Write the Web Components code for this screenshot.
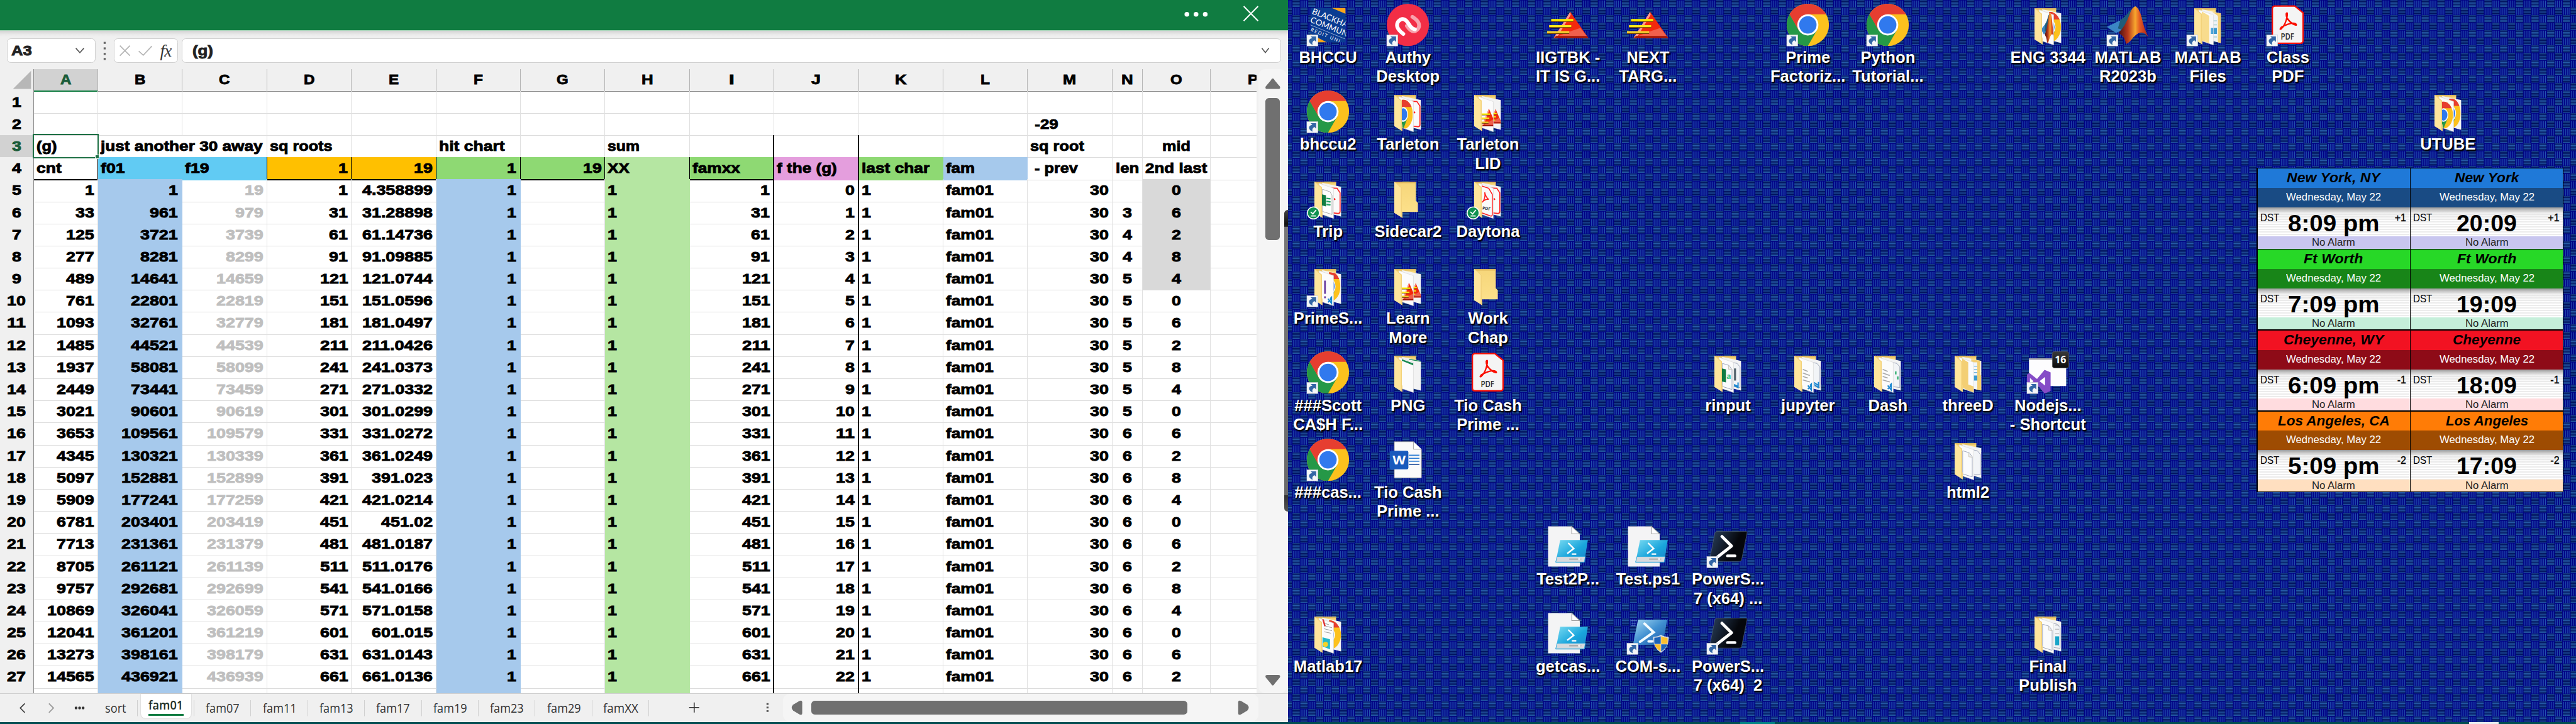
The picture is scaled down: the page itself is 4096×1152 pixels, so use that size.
<!DOCTYPE html>
<html lang="en">
<head>
<meta charset="utf-8">
<title>Desktop</title>
<style>
html,body{margin:0;padding:0;overflow:hidden;background:#000080}
body{font-family:"Liberation Sans",Arial,sans-serif}
desk-screen{zoom:.8}
</style>
</head>
<body>
<desk-screen></desk-screen>
<script>
const make=(host,html)=>{const r=host.attachShadow({mode:'open'});r.innerHTML=html;return r;};

/* Advance widths (em) of the heavy sans face used by the workbook. */
const HEAVY={' ':.333,'.':.333,'-':.333,'(':.389,')':.389,f:.389,i:.333,j:.333,l:.333,m:1,r:.444,s:.611,t:.444,v:.611,w:.944,y:.611,z:.556,
A:.778,B:.778,C:.778,D:.778,E:.722,F:.667,G:.833,H:.833,I:.389,J:.667,K:.833,L:.667,M:.944,N:.833,O:.833,P:.722,X:.778};
const heavyWidth=(s,size)=>[...s].reduce((a,c)=>a+(HEAVY[c]??.667),0)*size;

/* One line of text set to an exact width. */
class FitText extends HTMLElement{
  connectedCallback(){
    if(this.shadowRoot)return;
    const heavy=this.hasAttribute('heavy');
    const w=this.getAttribute('w')||heavyWidth(this.textContent,+this.getAttribute('heavy')||28);
    const r=make(this,`<style>:host{display:inline-block;flex:none;white-space:pre;width:${w}px;text-align:left}
    span{display:inline-block;transform-origin:0 50%;${heavy?'font-weight:700;-webkit-text-stroke:1.1px currentColor;':''}}</style><span><slot></slot></span>`);
    const s=r.querySelector('span');
    const k=this.getBoundingClientRect().width/s.getBoundingClientRect().width;
    if(isFinite(k)&&k>0)s.style.transform=`scaleX(${k.toFixed(4)})`;
  }
}
customElements.define('fit-text',FitText);

class TitleBar extends HTMLElement{
  connectedCallback(){make(this,`<style>:host{display:flex;justify-content:flex-end;align-items:flex-start;height:60px;background:#107c41;border-bottom:2px solid #a9d6ba;padding-right:57px;box-sizing:content-box}
  svg{display:block}</style>
  <svg width="150" height="60" viewBox="2353 0 150 60"><g fill="#fff"><circle cx="2359.5" cy="28.5" r="4.7"/><circle cx="2377.7" cy="28.5" r="4.7"/><circle cx="2396" cy="28.5" r="4.7"/></g><path d="M2472.500 12.500L2501 41.500M2501 12.500L2472.500 41.500" stroke="#fff" stroke-width="2.600"/></svg>`);}
}
customElements.define('title-bar',TitleBar);

class FormulaBar extends HTMLElement{
  connectedCallback(){make(this,`<style>:host{display:flex;height:76px;box-sizing:border-box;padding:15px 14px 12px;background:linear-gradient(#d3d3d3,#e9e9e9 7px,#f0f0f0 12px);font-size:27px}
  .b{background:#fff;border:1px solid #cfcfcf;border-radius:8px;box-sizing:border-box;height:49px;display:flex;align-items:center}
  .n{width:176px;padding:0 20px 0 7px;justify-content:space-between;color:#222}
  .d{width:36px;display:flex;align-items:center;justify-content:center}
  .f{width:128px;padding:0 8px 0 9px;gap:14px}
  .t{flex:1;margin-left:7px;padding:0 20px 0 20px;justify-content:space-between;color:#222}
  i{font:italic 34px "Liberation Serif",serif;color:#333;line-height:40px;letter-spacing:-1px}</style>
  <div class="b n"><fit-text heavy="27" w="41">A3</fit-text><svg width="20" height="14" viewBox="0 0 20 14"><path d="M2 2L10 11L18 2" fill="none" stroke="#555" stroke-width="2"/></svg></div>
  <div class="d"><svg width="6" height="40"><g fill="#666"><rect x="1" y="2" width="4" height="4"/><rect x="1" y="13" width="4" height="4"/><rect x="1" y="24" width="4" height="4"/><rect x="1" y="34" width="4" height="4"/></g></svg></div>
  <div class="b f"><svg width="24" height="24"><path d="M2 2L22 22M22 2L2 22" stroke="#b4b4b4" stroke-width="2"/></svg><svg width="30" height="24"><path d="M2 13L11 21L28 3" fill="none" stroke="#b4b4b4" stroke-width="2"/></svg><i>fx</i></div>
  <div class="b t"><fit-text heavy="28" w="41">(g)</fit-text><svg width="20" height="14" viewBox="0 0 20 14"><path d="M3 2L10 11L17 2" fill="none" stroke="#555" stroke-width="2"/></svg></div>`);}
}
customElements.define('formula-bar',FormulaBar);

const COLS='ABCDEFGHIJKLMNOP'.split('');
const CNT=[1,33,125,277,489,761,1093,1485,1937,2449,3021,3653,4345,5097,5909,6781,7713,8705,9757,10869,12041,13273,14565];
class SheetGrid extends HTMLElement{
  connectedCallback(){
    const rows=[{}, {M:' -29'}, {A:'(g)',B:'just another 30 away',D:'sq roots',F:'hit chart',H:'sum',M:'sq root',O:'mid'},
      {A:'cnt',B:'f01',C:'f19',D:'1',E:'19',F:'1',G:'19',H:'XX',I:'famxx',J:'f the (g)',K:'last char',L:'fam',M:' - prev',N:'len',O:'2nd last'}];
    CNT.forEach((c,k)=>{const n=30*k+1,q=n*n,s=String(q);rows.push({A:c,B:q,C:q+18,D:n,E:Number(Math.sqrt(q+18).toPrecision(7)),F:1,H:'1',I:n,J:k,K:'1',L:'fam01',M:30,N:k?String(s.length):'',O:k?s[s.length-2]:'0'});});
    rows.push({});
    let h='<div class="row head"><div class="rh corner"><svg width="40" height="38" viewBox="0 0 40 38"><path d="M38 1V37H2Z" fill="#b7b7b7"/></svg></div>';
    for(const c of COLS)h+=`<div class="ch ${c==='A'?'sel':''}"><fit-text heavy>${c}</fit-text></div>`;
    h+='</div>';
    rows.forEach((r,i)=>{
      const n=i+1;
      h+=`<div class="row r${n} ${n>4?'data':''} ${n===28?'last':''}"><div class="rh ${n===3?'sel':''}">${n<28?`<fit-text heavy>${n}</fit-text>`:''}</div>`;
      for(const c of COLS){
        const v=r[c];
        const num=typeof v==='number'||(n===4&&'DEFG'.includes(c));
        h+=`<div class="c ${c}${num?' num':''}${n>4&&n<10?' top5':''}">${v===undefined||v===''?'':`<fit-text heavy>${v}</fit-text>`}</div>`;
      }
      h+='</div>';
    });
    make(this,`<style>:host{display:block;width:2497px;height:1242px;overflow:hidden;background:#fff;font-size:28px;color:#000}
    .row{display:grid;grid-template-columns:67px 128px repeat(12,168px) 60px 136px 168px;height:44px;line-height:44px}
    .row>div{box-sizing:border-box;white-space:pre}
    .head{height:43.500px;background:#f0f0f0;line-height:43px}
    .ch{border-right:1px solid #b5b5b5;border-bottom:2px solid #8f8f8f;display:flex;justify-content:center}
    .ch.sel{background:#d2d2d2;color:#1a5c38;border-bottom:3px solid #107c41}
    .rh{background:#f0f0f0;border-right:1px solid #8f8f8f;border-bottom:1px solid #b0b0b0;display:flex;justify-content:center}
    .corner{justify-content:flex-end;align-items:center;padding-right:2px;border-bottom-color:#999}
    .rh.sel{background:#d2d2d2;color:#1a5c38}
    .c{border-right:1px solid #e0e0e0;border-bottom:1px solid #dcdcdc;display:flex;padding:0 6px 0 5px;position:relative;min-width:0}
    .c.num{justify-content:flex-end}
    .N,.O{justify-content:center}
    .N,.O,.c.N,.c.O{padding:0}
    .B.num,.F.num{padding-right:8px}
    .r3 .B{border-right-color:transparent}
    .data .B,.data .F{background:#a6c9ec;border-color:#a6c9ec}
    .data .H{background:#b5e6a2;border-color:#b5e6a2}
    .data .C{color:#bfbfbf}
    .c.O.top5{background:#d9d9d9;border-color:#d9d9d9}
    .row.r3>.I,.row.r4>.I,.row.data>.I,.row.r3>.J,.row.r4>.J,.row.data>.J{border-right:3px solid #000}
    .r3 .D,.r3 .E,.r3 .F,.r3 .G,.r3 .H,.r3 .I{border-bottom:1.500px solid #000}
    .r4 .A{border-right-color:#000;border-bottom:3px solid #000}
    .r4 .B,.r4 .C{background:#61cbf3;border-color:#61cbf3}
    .r4 .C{border-right-color:#000}
    .r4 .D,.r4 .E,.r4 .F,.r4 .G,.r4 .H,.r4 .I{border-right:1px solid #000;border-bottom:3px solid #000}
    .r4 .D,.r4 .E{background:#ffc000}.r4 .F,.r4 .G,.r4 .I{background:#8ed973}.r4 .H{background:#b5e6a2}
    .r4 .J{background:#e49edd;border-bottom-color:#e49edd}.r4 .K{background:#8ed973;border-color:#8ed973}.r4 .L{background:#a6c9ec;border-color:#a6c9ec}
    .r3 .A::before{content:"";position:absolute;left:-2px;top:-2px;right:-2px;bottom:-2px;border:3px solid #1e7145;z-index:1}
    .r3 .A::after{content:"";position:absolute;right:-4px;bottom:-4px;width:7px;height:7px;background:#1e7145;border:1px solid #fff;z-index:2}
    .c fit-text{position:relative;z-index:1}
    .last{height:14px}</style>${h}`);
  }
}
customElements.define('sheet-grid',SheetGrid);

class ScrollV extends HTMLElement{
  connectedCallback(){make(this,`<style>:host{display:flex;width:63px;height:1242px;background:#f0f0f0;padding-left:4px;box-sizing:border-box}
  .t{width:57px;height:100%;background:#f5f5f5;border-radius:14px;display:flex;flex-direction:column;align-items:center;box-sizing:border-box;padding:18px 0 15px}
  .h{width:28px;height:282px;border-radius:7px;background:#707070;margin-top:18px;margin-bottom:auto}
  svg{display:block}</style><div class="t"><svg width="32" height="22"><path d="M16 1Q18 1 20 5L30 17Q32 22 27 22H5Q0 22 2 17L12 5Q14 1 16 1Z" fill="#707070"/></svg><div class="h"></div><svg width="32" height="22"><path d="M16 21Q18 21 20 17L30 5Q32 0 27 0H5Q0 0 2 5L12 17Q14 21 16 21Z" fill="#707070"/></svg></div>`);}
}
customElements.define('scroll-v',ScrollV);

class TabBar extends HTMLElement{
  connectedCallback(){
    const tabs=['fam07','fam11','fam13','fam17','fam19','fam23','fam29','famXX'];
    make(this,`<style>:host{display:flex;height:56px;background:#f0f0f0;border-top:1px solid #cfcfcf;box-sizing:border-box;font:25px "Open Sans","Noto Sans",sans-serif;color:#333}
    .nav{width:209px;display:flex;align-items:center;padding-left:36px;box-sizing:border-box}
    .tab{width:113px;display:flex;justify-content:center;align-items:center;line-height:54px}
    .tab{background:linear-gradient(#c8c8c8,#c8c8c8) right 12px/1px 32px no-repeat;padding-top:2px;box-sizing:border-box}
    .sort{width:65px;justify-content:flex-start}
    .on{width:112px;padding:0 6px;display:flex;box-sizing:border-box;background:linear-gradient(#c8c8c8,#c8c8c8) right 12px/1px 32px no-repeat}
    .on>div{flex:1;height:49px;background:#fff;border-radius:0 0 9px 9px;margin-top:-1px;box-shadow:0 0 2px #aaa;display:flex;flex-direction:column;align-items:center;color:#1f2f27}
    .on fit-text{line-height:46px;height:41px;font-weight:600}
    .on u{display:block;width:70px;height:3px;background:#107c41}
    .plus{width:238px;display:flex;align-items:center;justify-content:space-between;padding-left:79px;box-sizing:border-box}
    .hs{margin-left:28px;width:945px;background:#f5f5f5;border-radius:14px;margin-top:-1px;display:flex;align-items:center;padding-left:17px;box-sizing:border-box}
    .th{width:747px;height:28px;border-radius:7px;background:#707070;margin:0 100px 0 17px}
    svg{display:block;flex:none}</style>
    <div class="nav"><svg width="140" height="24" viewBox="36 0 140 24"><path d="M49 3L40 12L49 21" fill="none" stroke="#444" stroke-width="2.200"/><path d="M97 3L106 12L97 21" fill="none" stroke="#999" stroke-width="2.200"/><g fill="#333"><circle cx="151" cy="12" r="2.800"/><circle cx="158" cy="12" r="2.800"/><circle cx="165" cy="12" r="2.800"/></g></svg></div>
    <div class="tab sort"><fit-text w="42">sort</fit-text></div>
    <div class="on"><div><fit-text w="69">fam01</fit-text><u></u></div></div>
    ${tabs.map(t=>`<div class="tab"><fit-text w="${t==='famXX'?70:67}">${t}</fit-text></div>`).join('')}
    <div class="plus"><svg width="22" height="22"><path d="M11 1V21M1 11H21" stroke="#333" stroke-width="2"/></svg><svg width="6" height="20"><g fill="#555"><rect x="1" y="1" width="4" height="3.500"/><rect x="1" y="8" width="4" height="3.500"/><rect x="1" y="15" width="4" height="3.500"/></g></svg></div>
    <div class="hs"><svg width="23" height="30"><path d="M1 15Q1 12 4 9L16 2Q22 -1 22 4V26Q22 31 16 28L4 21Q1 18 1 15Z" fill="#707070"/></svg><div class="th"></div><svg width="23" height="30"><path d="M22 15Q22 12 19 9L7 2Q1 -1 1 4V26Q1 31 7 28L19 21Q22 18 22 15Z" fill="#707070"/></svg></div>`);
  }
}
customElements.define('tab-bar',TabBar);

class WorkbookWindow extends HTMLElement{
  connectedCallback(){make(this,`<style>:host{display:flex;flex-direction:column;width:2560px;height:1436px;background:#f0f0f0;position:relative}
  .m{display:flex;height:1242px}
  .edge{position:absolute;left:2553px;top:418px;width:7px;height:600px;border-radius:7px 0 0 7px;background:linear-gradient(#444 0,#111 28px,#222 33px,#777 34px,#6a6a6a 567px,#333 568px,#555 600px)}</style>
  <title-bar></title-bar><formula-bar></formula-bar><div class="m"><sheet-grid></sheet-grid><scroll-v></scroll-v></div><tab-bar></tab-bar><div class="edge"></div>`);}
}
customElements.define('workbook-window',WorkbookWindow);

/* ---------- icon artwork, all on an 84 x 84 canvas ---------- */
let uid=0;
const chrome=()=>{const i='k'+(++uid);return `<clipPath id="${i}"><circle cx="42" cy="42" r="42"/></clipPath><g clip-path="url(#${i})"><rect width="84" height="84" fill="#fcc11d"/><path d="M0 10L23.800 52.500L42 60L60.200 52.500L42 84H0Z" fill="#259847"/><path d="M0 0H84V21H42V42L23.800 52.500L5.600 21L0 12Z" fill="#e63e30"/></g><circle cx="42" cy="42" r="21" fill="#fff"/><circle cx="42" cy="42" r="17.300" fill="#3079ee"/>`;};
const shortcut='<rect x="0" y="62" width="22" height="22" fill="#f4f6f8" stroke="#c9ced6" stroke-width=".8"/><path d="M7.500 65H18.500V76L15 72.500Q9 76 11.500 82Q3 78 4.500 72.500Q6 69 11 68.500Z" fill="#3366a5"/>';
const air=()=>`<path d="M46 16L82 68H13Z" fill="#f2290d"/><path d="M46 16L13 68H19L47 22Z" fill="#ff9c8c"/><path d="M66 48L82 68H13L40 57Z" fill="#f0604c"/><path d="M18 64H79L82 68H13Z" fill="#a31506"/><path d="M8 34.500H52M4 46.500H48M0 58.500H44" stroke="#6c3a00" stroke-width="3"/><path d="M8 32.500H52" stroke="#fff200" stroke-width="4.200"/><path d="M4 44.500H48" stroke="#ffe81a" stroke-width="4.200"/><path d="M0 56.500H44" stroke="#f4d12f" stroke-width="4.200"/>`;
const pdf=()=>`<path d="M15 4.500H56L72.500 18V73Q72.500 78.500 67 78.500H17Q11.500 78.500 11.500 73V10Q11.500 4.500 17 4.500Z" fill="#f4f4f4" stroke="#fa0f00" stroke-width="2.800"/><path d="M29 47Q25 52 29 50Q38 42 41 24Q42 15 39 20Q38 30 52 40Q62 45 58 40Q50 35 29 47Z" fill="none" stroke="#fa0f00" stroke-width="2.800"/><text x="28" y="71" font-family="Open Sans,sans-serif" font-weight="600" font-size="17" textLength="27" lengthAdjust="spacingAndGlyphs" fill="#2c2c2c">PDF</text>`;
const matlab=()=>{const i='m'+(++uid);return `<linearGradient id="${i}" x1="0" x2="1"><stop offset="0" stop-color="#4b1012"/><stop offset=".3" stop-color="#b5371b"/><stop offset=".55" stop-color="#f7a62e"/><stop offset=".7" stop-color="#e35a22"/><stop offset="1" stop-color="#a81d1a"/></linearGradient><path d="M0 46L24 34Q30 34 36 27L56 5Q48 34 34 50Q24 56 18 58Z" fill="#3b86c4"/><path d="M27 32Q36 28 44 15L57 5Q46 40 32 52L22 49Z" fill="#1f5c79"/><path d="M57 5Q66 10 71 35Q76 54 83 67Q74 54 64 58Q56 62 50 70Q44 78 38 80Q36 66 26 60L24 57Q36 46 45 22Q50 6 57 5Z" fill="url(#${i})"/>`;};

/* Open folder: front and back sheets carry small previews. */
const folder=(front,back)=>{const i='f'+(++uid);
  const papers=front===null?'':`<clipPath id="${i}a"><path d="M44 15L68 19V78L44 72Z"/></clipPath><clipPath id="${i}b"><path d="M30 13L53 22V82L30 73Z"/></clipPath>
  <path d="M30 11L68 19V78L52 74Z" fill="#f3f3f3"/><g clip-path="url(#${i}a)">${back||''}</g>
  <path d="M24 12L53 22V82L30 74Z" fill="#fbfbfb" stroke="#d5d5d5" stroke-width=".8"/><g clip-path="url(#${i}b)">${front||''}</g>`;
  return `<linearGradient id="${i}" x1="0" x2="0" y1="0" y2="1"><stop offset="0" stop-color="#f6d67a"/><stop offset="1" stop-color="#fce08a"/></linearGradient>
  <path d="M15 9H58V47L62 51V69H15Z" fill="url(#${i})"/><path d="M15 9H58V12H15Z" fill="#dfb85c"/>${papers}
  <path d="M15 9L30 20V66L31 70V81L15 71Z" fill="#ffe69c"/><path d="M15 9L30 20V66L31 70V81L28 79V21Z" fill="#f3d27a"/>`;};
const sc=(s,x,y,k,ky)=>`<g transform="translate(${x} ${y}) scale(${k} ${ky||k})">${s}</g>`;
const vs='<path d="M49 68L42 75M42 68L49 77V65L46 68" fill="none" stroke="#1a86d0" stroke-width="2.500"/>';
const lines='<path d="M32 36L42 40M32 43L46 48M32 50L42 53M32 57L46 61" stroke="#a8a8a8" stroke-width="2"/>';
const outline='<path d="M31 24L44 28L50 36V76L31 70Z" fill="#fafbfd" stroke="#8a93ab" stroke-width="1"/><path d="M43 28V36L50 37" fill="#e9e9e9" stroke="#b9b09a" stroke-width=".8"/>';
const outB='<path d="M50 22L60 24L66 31V72L50 70" fill="#f2f4f7" stroke="#8a93ab" stroke-width="1"/>';
const pdfB='<path d="M40 21L60 22L66 31V68Q66 72 62 72L44 70" fill="#fafafa" stroke="#f22" stroke-width="2"/><path d="M54 42L56 45" stroke="#f22" stroke-width="3"/>';
const tick='<circle cx="13" cy="71" r="12" fill="#0f9150" stroke="#fff" stroke-width="2"/><path d="M7.500 69L12 73L18.500 65M8 77H18" fill="none" stroke="#fff" stroke-width="2.200"/>';
const ART={
  bhccu:()=>`<clipPath id="bh"><rect x="7" y="8" width="70" height="69" rx="2"/></clipPath><g clip-path="url(#bh)"><rect x="7" y="8" width="70" height="69" fill="#0a3c92"/><path d="M49 8H77V20Z M7 60L40 77H7Z" fill="#f9a51b"/><g transform="rotate(22 11 20)" font-family="Lato,sans-serif" fill="#fff"><text x="9" y="20" font-size="16.500">BLACKHAW</text><text x="12" y="37" font-size="16.500">COMMUNI</text><path d="M14 42H90" stroke="#9db6dd" stroke-width="1"/><text x="20" y="53" font-size="9.500" letter-spacing="2">REDIT UNI</text></g></g>${shortcut}`,
  authy:()=>`<circle cx="42" cy="42" r="42" fill="#f22e46"/><g fill="none" stroke-linecap="round" stroke-width="7.500"><path d="M51 26Q70 38 62 50Q54 60 44 49L40 44" stroke="#f8a3ad"/><path d="M33 60Q15 47 23 35Q32 25 41 36L47 45Q51 50 56 51" stroke="#fff"/></g>${shortcut}`,
  air, chrome:()=>chrome()+shortcut, pdf, pdfs:()=>pdf()+shortcut, matlab:()=>matlab()+shortcut,
  tarleton:()=>folder(sc(chrome(),14,18,.45,.7),pdfB),
  airf:()=>folder(sc(air(),25,25,.42,.68),sc(air(),42,28,.34,.55)),
  trip:()=>folder('<path d="M31 24L46 29L50 36V74L31 68Z" fill="#fff" stroke="#999"/><path d="M30 34L38 36V58L30 56Z" fill="#107c41"/><path d="M39 42L47 43M39 48L47 49M39 54L47 55" stroke="#21a366" stroke-width="3"/>',pdfB)+tick,
  daytona:()=>folder('<path d="M26 16L44 22L51 34V74Q51 78 47 77L28 70" fill="#fafafa" stroke="#f22" stroke-width="2"/><path d="M31 50Q38 42 36 30Q38 40 44 44Q36 43 31 50Z" fill="none" stroke="#f22" stroke-width="2"/><text x="31" y="64" transform="rotate(8 31 64)" font-family="Open Sans,sans-serif" font-weight="700" font-size="8.500" fill="#333">PDF</text>',pdfB)+tick,
  empty:()=>folder(null),
  primes:()=>folder('<path d="M36 32V58M36 63V67" stroke="#6b3fa0" stroke-width="3.500"/>'+vs,sc(chrome(),28,14,.46,.7))+shortcut,
  png:()=>folder('<path d="M26 14L53 24V28L26 17Z" fill="#1b8a53"/>','<path d="M26 12L68 18V21L36 15Z" fill="#1b8a53"/>'),
  matlab17:()=>folder('<path d="M34 22L44 25M34 27L50 31M34 33L50 37M34 39L48 42" stroke="#9a9a9a" stroke-width="1.200"/><path d="M32 14L36 28" stroke="#d33" stroke-width="3"/><path d="M31 50L46 54V74L31 68Z" fill="#22b8c8"/><circle cx="37" cy="64" r="5" fill="#f5d327"/>',sc(chrome(),20,16,.57,.7)),
  word:()=>`<path d="M15 6H53L69 21V78H15Z" fill="#fafafa" stroke="#8c8c8c"/><path d="M53 6V21H69" fill="#fff" stroke="#8c8c8c"/><path d="M44 33H65M44 39H65M44 45H65" stroke="#2b7cd3" stroke-width="2"/><path d="M44 51H65" stroke="#103f91" stroke-width="2"/><rect x="6" y="24" width="37" height="37" rx="3" fill="#185abd"/><text x="11.500" y="51" font-family="Open Sans,sans-serif" font-weight="700" font-size="25" textLength="26" lengthAdjust="spacingAndGlyphs" fill="#fff">W</text>`,
  engf:()=>folder(sc(matlab(),28,12,.32,.85),sc(chrome(),24,16,.52,.72)),
  matf:()=>folder('<path d="M28 14L45 24V80L28 72Z" fill="#f8dc8d"/><path d="M46 22V80H53V22Z" fill="#f7f7f7"/><path d="M48 48H53V60H48Z" fill="#4aa3d8"/>','<path d="M48 14H68V84H60L62 24Z" fill="#f4cf72"/><path d="M48 26H62V78H48Z" fill="#eef3f7"/><path d="M52 34H60M52 42H60M52 66H60" stroke="#9cc" stroke-width="1.500"/><path d="M52 48H60V60H52Z" fill="#3c99cf"/>')+shortcut,
  utube:()=>folder(sc(chrome(),14,22,.45,.64),sc(chrome(),30,16,.44,.7)),
  rinput:()=>folder(outline+'<path d="M30 34L38 36V62L30 60Z" fill="#107c41"/><text x="39" y="55" font-family="Open Sans,sans-serif" font-weight="700" font-size="15" fill="#34c481">a</text>',outB+'<path d="M56 34V58" stroke="#51606b" stroke-width="4"/><path d="M54 66L62 70M62 62V72L54 68" stroke="#1a86d0" stroke-width="2.500" fill="none"/>'),
  jupyter:()=>folder(lines+vs,outB+'<path d="M54 62L63 68M63 61V72L54 66" stroke="#1a86d0" stroke-width="2.500" fill="none"/>'),
  dash:()=>folder(lines+vs,outB+'<path d="M58 40V46M62 50V56" stroke="#34b071" stroke-width="3"/>'),
  threed:()=>folder('<path d="M26 12L42 22V66L53 70V82L42 78L26 70Z" fill="#f3cf74"/>','<path d="M48 12H58V17H66V46L69 51V80H48Z" fill="#f4cf72"/><path d="M48 22H60V77H48Z" fill="#f3f6f9"/><path d="M52 30H60M52 36H60M52 42H60" stroke="#6db1dd" stroke-width="1.500"/><path d="M52 48H60V58H52Z" fill="#3c99cf"/>'),
  html2:()=>folder(outline,outB),
  finalp:()=>folder(outline,outB+'<path d="M56 48H64V66H56Z" fill="#18a5c8"/><path d="M56 26H64M56 34H64M56 42H64" stroke="#999" stroke-width="1"/>'),
  node:()=>`<path d="M4 14H78V69H4Z" fill="#fdfdfe"/><path d="M4 14H78V16.500H4Z" fill="#8d8d92"/><path d="M0 46L5 43L20 55L35 37L47 42V79L35 84L20 66L6 77L0 74Z" fill="#854cc7"/><path d="M6 53V66L13 59.500ZM25 59.500L36 51V68Z" fill="#fff"/>${shortcut}<linearGradient id="nb" x1="0" x2="0" y1="0" y2="1"><stop offset="0" stop-color="#3a3a3a"/><stop offset="1" stop-color="#0a0a0a"/></linearGradient><rect x="50.500" y=".5" width="32.500" height="32.500" rx="4" fill="url(#nb)" stroke="#555"/><text x="66.700" y="24" text-anchor="middle" font-family="Open Sans,sans-serif" font-weight="700" font-size="20" fill="#fff">16</text>`,
  ps1:()=>{const i='p'+(++uid);return `<linearGradient id="${i}" x1="0" x2="1" y1="0" y2="1"><stop offset="0" stop-color="#7bdcf2"/><stop offset=".55" stop-color="#19a5dc"/><stop offset="1" stop-color="#1b7fc4"/></linearGradient><path d="M2 2H49L65 18V82H2Z" fill="#f4f4f5"/><path d="M49 2V17H65Z" fill="#fff" stroke="#9a9a9a" stroke-width="1.300"/><path d="M26 29H81L74 74H17Z" fill="url(#${i})"/><path d="M20 62H76L74 73H17Z" fill="#d7dadd" stroke="#2aa9dc" stroke-width="1.200"/><path d="M44 67H68" stroke="#999" stroke-width="2"/><circle cx="64" cy="67" r="2.500" fill="#eee"/><path d="M42 35L53 46L40 56M49 57H58" fill="none" stroke="#fff" stroke-width="3"/>`;},
  ps7:()=>{const i='p'+(++uid);return `<linearGradient id="${i}" x1="0" x2="1" y1="0" y2=".4"><stop offset="0" stop-color="#2b4260"/><stop offset=".75" stop-color="#05070c"/></linearGradient><path d="M20 12H78Q81 12 80 15L69 69Q68.500 71.500 65 71.500H8Q4.500 71.500 5.500 68L16 15Q17 12 20 12Z" fill="url(#${i})" stroke="#4b5a70" stroke-width="1"/><path d="M30 22L49 41L21 63" fill="none" stroke="#fff" stroke-width="6" stroke-linecap="round" stroke-linejoin="round"/><path d="M41 60.500H56" stroke="#fff" stroke-width="5.500" stroke-linecap="round"/>${shortcut}`;},
  com:()=>`<linearGradient id="cg" x1="0" x2="1" y1="0" y2="1"><stop offset="0" stop-color="#a9dcf5"/><stop offset=".5" stop-color="#3f8fd0"/><stop offset="1" stop-color="#1a55a8"/></linearGradient><path d="M22 15H80L71 65H12Z" fill="url(#cg)"/><path d="M7 17H20M9 22H18M8 27H17" stroke="#79a8dd" stroke-width="1.500" opacity=".6"/><path d="M35 23L53 40L26 59M43 58H50" fill="none" stroke="#f2fbff" stroke-width="5" stroke-linecap="round"/><path d="M67.500 45Q74 49 83 49Q84 70 67.500 81Q51 70 52 49Q61 49 67.500 45Z" fill="#d9dee4"/><path d="M67 48V63H54.500Q54 57 54.500 51Q61 51 67 48Z" fill="#1c62b8"/><path d="M68 48Q74 51 80.500 51Q81 57 80.500 63H68Z" fill="#fbc02d"/><path d="M67 64V78Q57 72 54.800 64Z" fill="#fbc02d"/><path d="M68 64V78Q78 72 80.200 64Z" fill="#1c62b8"/>${shortcut}`
};

class DesktopIcon extends HTMLElement{
  connectedCallback(){make(this,`<style>:host{display:flex;flex-direction:column;align-items:center;width:159px;height:173px}
  svg{display:block;flex:none;overflow:visible}
  .l{white-space:pre;text-align:center;font-weight:700;font-size:32px;line-height:38px;color:#fff;margin-top:4px;text-shadow:2px 2px 2px #000,1px 2px 3px #000}</style>
  <svg width="84" height="84" viewBox="0 0 84 84">${ART[this.getAttribute('art')]()}</svg><div class="l"><slot></slot></div>`);}
}
customElements.define('desktop-icon',DesktopIcon);

class ClockCell extends HTMLElement{
  connectedCallback(){
    const g=a=>this.getAttribute(a)||'';
    make(this,`<style>:host{display:grid;grid-template-rows:38.500px 38.500px 58px 24px;background:#fff;color:#000}
    div{display:flex;justify-content:center;position:relative}
    .c{background:${g('c1')};font:italic 700 27px/37px "Liberation Sans",sans-serif}
    .d{background:${g('c2')};color:#fff;font-size:21px;line-height:37px}
    .t{background:linear-gradient(#999,#bbb 4px,rgba(230,230,230,.6) 11px,rgba(255,255,255,0) 30px),repeating-linear-gradient(#fff 0 2.500px,#ececec 2.500px 5px);font-weight:700;font-size:47px;line-height:64px;justify-content:space-between}
    .t>*{flex:none}
    .s{width:51px;padding-left:5px;font-weight:400;font-size:21px;line-height:42px;box-sizing:border-box}
    .o{width:51px;padding-right:7px;font-weight:400;font-size:20px;line-height:42px;box-sizing:border-box;text-align:right;-webkit-text-stroke:.4px #000}
    .a{background:${g('c3')};font-size:20px;line-height:24px;color:#222}</style>
    <div class="c"><fit-text w="${g('w')}">${g('city')}</fit-text></div><div class="d"><fit-text w="189">Wednesday, May 22</fit-text></div>
    <div class="t"><span class="s"><fit-text w="38">DST</fit-text></span><fit-text w="${g('tw')}">${g('time')}</fit-text><span class="o">${g('off')}</span></div>
    <div class="a"><fit-text w="86">No Alarm</fit-text></div>`);
  }
}
customElements.define('clock-cell',ClockCell);

class ClockBoard extends HTMLElement{
  connectedCallback(){
    const d=[['New York, NY',186,'8:09 pm','+1','#1f79d8','#194b84','#c8c6ef'],['New York',128,'20:09','+1','#1f79d8','#194b84','#c8c6ef'],
    ['Ft Worth',118,'7:09 pm','','#27d827','#188518','#c5efda'],['Ft Worth',118,'19:09','','#27d827','#188518','#c5efda'],
    ['Cheyenne, WY',199,'6:09 pm','-1','#f21222','#8e0b17','#ffdcdf'],['Cheyenne',135,'18:09','-1','#f21222','#8e0b17','#ffdcdf'],
    ['Los Angeles, CA',222,'5:09 pm','-2','#ff7c06','#9e4c02','#ffdfc0'],['Los Angeles',164,'17:09','-2','#ff7c06','#9e4c02','#ffdfc0']];
    make(this,`<style>:host{display:grid;grid-template-columns:302.500px 302.500px;gap:2px;padding:1.500px;background:#000;width:609px;box-sizing:border-box;justify-content:space-between}</style>`+
    d.map(r=>`<clock-cell city="${r[0]}" w="${r[1]}" time="${r[2]}" tw="${r[2].length>5?182:120}" off="${r[3]}" c1="${r[4]}" c2="${r[5]}" c3="${r[6]}"></clock-cell>`).join(''));
  }
}
customElements.define('clock-board',ClockBoard);

class DesktopArea extends HTMLElement{
  connectedCallback(){
    const items=[[0,0,'bhccu','BHCCU'],[1,0,'authy','Authy\nDesktop'],[3,0,'air','IIGTBK -\nIT IS G...'],[4,0,'air','NEXT\nTARG...'],[6,0,'chrome','Prime\nFactoriz...'],[7,0,'chrome','Python\nTutorial...'],[9,0,'engf','ENG 3344'],[10,0,'matlab','MATLAB\nR2023b'],[11,0,'matf','MATLAB\nFiles'],[12,0,'pdfs','Class\nPDF'],
    [0,1,'chrome','bhccu2'],[1,1,'tarleton','Tarleton'],[2,1,'airf','Tarleton\nLID'],[14,1,'utube','UTUBE'],
    [0,2,'trip','Trip'],[1,2,'empty','Sidecar2'],[2,2,'daytona','Daytona'],
    [0,3,'primes','PrimeS...'],[1,3,'airf','Learn\nMore'],[2,3,'empty','Work\nChap'],
    [0,4,'chrome','###Scott\nCA$H F...'],[1,4,'png','PNG'],[2,4,'pdf','Tio Cash\nPrime ...'],[5,4,'rinput','rinput'],[6,4,'jupyter','jupyter'],[7,4,'dash','Dash'],[8,4,'threed','threeD'],[9,4,'node','Nodejs...\n- Shortcut'],
    [0,5,'chrome','###cas...'],[1,5,'word','Tio Cash\nPrime ...'],[8,5,'html2','html2'],
    [3,6,'ps1','Test2P...'],[4,6,'ps1','Test.ps1'],[5,6,'ps7','PowerS...\n7 (x64) ...'],
    [0,7,'matlab17','Matlab17'],[3,7,'ps1','getcas...'],[4,7,'com','COM-s...'],[5,7,'ps7','PowerS...\n7 (x64)  2'],[9,7,'finalp','Final\nPublish']];
    let v='',w='';
    for(let k=0;k<4;k++){const p=1.4+k*3.6;v+=`M${p+.9} 1V14.500M${p+15.600+.9} 16V29.500`;}
    for(let k=0;k<5;k++){const p=1.300+k*3;w+=`M16.200 ${p}H30.600M.6 ${p+15}H15`;}
    make(this,`<style>:host{display:block;position:relative;width:2560px;height:1436px;overflow:hidden}
    .bg{position:absolute;inset:0}
    .grid{position:relative;display:grid;grid-template-columns:repeat(16,159px);grid-auto-rows:173px;padding-top:7px}
    clock-board{position:absolute;left:1925.500px;top:334px}</style>
    <svg class="bg" width="2560" height="1436"><defs><pattern id="weave" width="31.170" height="30" x="24" y="0" patternUnits="userSpaceOnUse"><rect width="31.170" height="30" fill="#000084"/><path d="M16.200 0H30.800V14.500H16.200ZM.6 15H15V29.500H.6Z" fill="#00125c"/><path d="${v}" stroke="#2a66b8" stroke-width="1.150"/><path d="${w}" stroke="#2a66b4" stroke-width="1.150"/></pattern></defs><rect width="2560" height="1436" fill="url(#weave)"/></svg>
    <div class="grid">${items.map(i=>`<desktop-icon art="${i[2]}" style="grid-column:${i[0]+1};grid-row:${i[1]+1}">${i[3]}</desktop-icon>`).join('')}</div>
    <clock-board></clock-board>`);
  }
}
customElements.define('desktop-area',DesktopArea);

class DeskScreen extends HTMLElement{
  connectedCallback(){make(this,`<style>:host{display:block;width:5120px;height:1440px;overflow:hidden;background:#000080}
  .m{display:flex}
  .s{display:flex;height:4px;background:#004e52}
  .s i{display:block;width:68px;margin-left:3459px;background:#008484}.s b{display:block;width:58px;margin-left:1381px;background:#e8eef0}</style>
  <div class="m"><workbook-window></workbook-window><desktop-area></desktop-area></div><div class="s"><i></i><b></b></div>`);}
}
customElements.define('desk-screen',DeskScreen);
</script>
</body>
</html>
